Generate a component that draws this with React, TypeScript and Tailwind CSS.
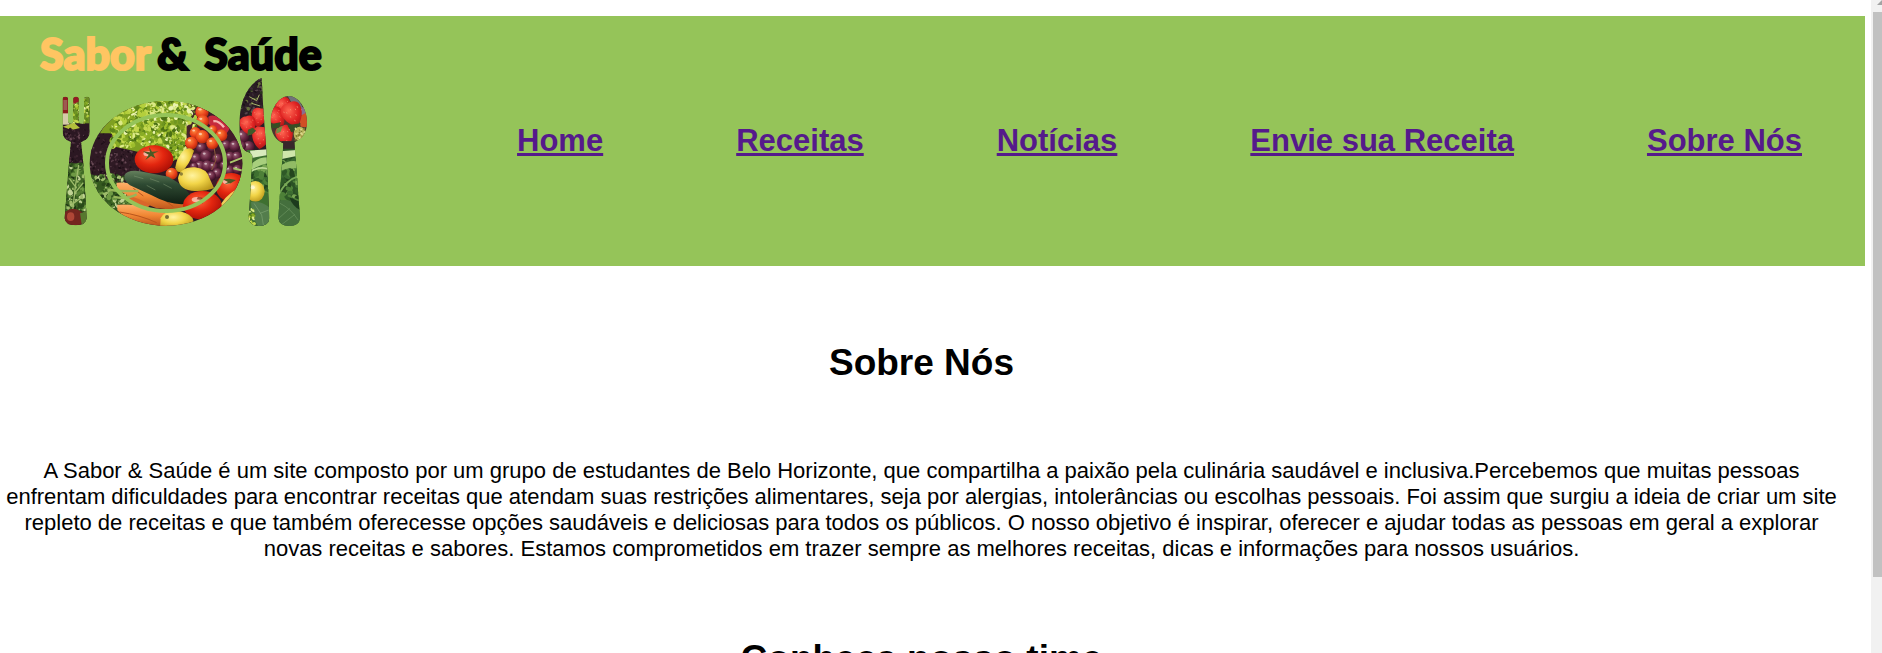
import React from 'react';

type Region = {
  seed: number;
  count: number;
  box: [number, number, number, number];
  size: [number, number];
  colors: string[];
};

function scatter({ seed, count, box, size, colors }: Region) {
  let s = seed;
  const next = () => {
    s = (s * 16807) % 2147483647;
    return s / 2147483647;
  };
  for (let i = 0; i < 5; i++) next();
  return Array.from({ length: count }, () => {
    const x = box[0] + next() * (box[2] - box[0]);
    const y = box[1] + next() * (box[3] - box[1]);
    const r = size[0] + next() * (size[1] - size[0]);
    const squash = 0.4 + next() * 0.5;
    const turn = next() * 180;
    const fill = colors[Math.floor(next() * colors.length)];
    return { x, y, r, squash, turn, fill };
  });
}

function Texture(props: Region) {
  return (
    <g>
      {scatter(props).map((d, i) => (
        <ellipse
          key={i}
          cx={d.x}
          cy={d.y}
          rx={d.r}
          ry={d.r * d.squash}
          fill={d.fill}
          transform={`rotate(${d.turn} ${d.x} ${d.y})`}
        />
      ))}
    </g>
  );
}

const LETTUCE = ['#c3d84e', '#9dbd2c', '#6f9620', '#4b7015', '#dbe986', '#b4cf3c', '#8aad25', '#e9f2ae', '#5c841a'];
const BEANS = ['#2a1620', '#3f2531', '#1d0f17', '#533542', '#35202a', '#6a4a56'];
const HERBS = ['#3f6a26', '#6f9a44', '#2a4a1a', '#9dbb6a', '#557f33', '#1f3815', '#c0d294'];
const LEAVES = ['#4d8038', '#2f5a27', '#77a552', '#3c6c31', '#24451f'];

function Ball({ x, y, r, fill, ry }: { x: number; y: number; r: number; fill: string; ry?: number }) {
  return (
    <g>
      <ellipse cx={x} cy={y} rx={r} ry={ry ?? r} fill={fill} />
      <ellipse cx={x - r * 0.3} cy={y - (ry ?? r) * 0.4} rx={r * 0.25} ry={(ry ?? r) * 0.18} fill="#fff" opacity="0.55" />
    </g>
  );
}

function Strawberry({ x, y, r, turn }: { x: number; y: number; r: number; turn: number }) {
  return (
    <g transform={`translate(${x} ${y}) rotate(${turn}) scale(${r / 30})`}>
      <path d="M0 36C-18 26-30 2-26-14C-22-28-8-30 0-28C10-30 24-28 27-13C30 3 17 27 0 36Z" fill="url(#berry)" />
      <path d="M-12-8v4M0-12v4M12-8v4M-7 5v4M8 6v4M0 18v4M-18-12v4M19-12v4" stroke="#f58a6c" strokeWidth="2" />
    </g>
  );
}

const GRAPES: [number, number, number][] = [
  [588, 476, 16], [604, 444, 16], [618, 468, 18], [600, 498, 16], [622, 498, 17], [582, 500, 12],
  [652, 476, 15], [640, 500, 14], [652, 520, 15], [634, 528, 14], [678, 436, 15], [704, 438, 17],
  [690, 470, 15], [710, 470, 15], [688, 512, 16], [712, 508, 14], [672, 496, 13], [636, 444, 13],
];

const CHERRY: [number, number, number][] = [
  [606, 336, 20], [608, 364, 19], [586, 398, 17], [607, 410, 20], [574, 429, 19], [637, 430, 18],
  [664, 406, 18], [638, 390, 14], [515, 521, 18],
];

function PlateLogo() {
  return (
    <svg viewBox="180 225 750 465" className="ml-5 h-[155px] w-[250px]" role="img" aria-label="Prato com talheres">
      <defs>
        <radialGradient id="tomato" cx="0.4" cy="0.35" r="0.7">
          <stop offset="0" stopColor="#ff6a3c" />
          <stop offset="0.5" stopColor="#e3260f" />
          <stop offset="1" stopColor="#a80d05" />
        </radialGradient>
        <radialGradient id="cherry" cx="0.4" cy="0.35" r="0.7">
          <stop offset="0" stopColor="#ff8a3c" />
          <stop offset="0.6" stopColor="#e8401a" />
          <stop offset="1" stopColor="#a82408" />
        </radialGradient>
        <radialGradient id="grape" cx="0.4" cy="0.35" r="0.7">
          <stop offset="0" stopColor="#9c6076" />
          <stop offset="0.55" stopColor="#642440" />
          <stop offset="1" stopColor="#2e0b1e" />
        </radialGradient>
        <radialGradient id="lemon" cx="0.4" cy="0.35" r="0.7">
          <stop offset="0" stopColor="#fff3a0" />
          <stop offset="0.5" stopColor="#f2d548" />
          <stop offset="1" stopColor="#bd9a1c" />
        </radialGradient>
        <linearGradient id="carrot" x1="0" y1="0" x2="0" y2="1">
          <stop offset="0" stopColor="#ffb069" />
          <stop offset="0.5" stopColor="#f08633" />
          <stop offset="1" stopColor="#b8501a" />
        </linearGradient>
        <linearGradient id="cucumber" x1="0" y1="0" x2="0" y2="1">
          <stop offset="0" stopColor="#64805c" />
          <stop offset="0.4" stopColor="#2f4b33" />
          <stop offset="1" stopColor="#101f13" />
        </linearGradient>
        <radialGradient id="berry" cx="0.4" cy="0.3" r="0.8">
          <stop offset="0" stopColor="#ff6652" />
          <stop offset="0.55" stopColor="#e02423" />
          <stop offset="1" stopColor="#9b1012" />
        </radialGradient>
        <clipPath id="plate">
          <ellipse cx="498" cy="490" rx="229" ry="187" />
        </clipPath>
        <clipPath id="fork">
          <path d="M188 298Q188 290 196 290Q204 290 204 298V362Q204 371 212 371Q220 371 220 362V298Q220 290 228 290Q236 290 236 298V362Q236 371 244 371Q252 371 252 362V298Q252 290 261 290Q269 290 269 298V396Q269 418 243 426L250 490L260 655Q258 676 227 676Q196 676 194 655L207 490L213 426Q188 418 188 396Z" />
        </clipPath>
        <clipPath id="knife">
          <path d="M785 234L790 330L799 450L808 655Q806 678 777 678Q749 678 746 655L758 475Q758 457 742 455C725 452 718 410 718 375C718 310 740 252 785 234Z" />
        </clipPath>
        <clipPath id="spoon">
          <path d="M866 288C895 288 921 325 921 366C921 400 905 418 883 426L888 490L900 655Q898 678 868 678Q838 678 835 655L846 490L850 430C828 422 812 400 812 366C812 325 838 288 866 288Z" />
        </clipPath>
      </defs>

      <g clipPath="url(#plate)">
        <rect x="260" y="300" width="480" height="390" fill="#2f1a24" />
        <Texture seed={71} count={420} box={[262, 370, 440, 590]} size={[2, 5]} colors={BEANS} />
        <path d="M300 400Q330 340 400 300H600L592 350L578 390L545 425L560 470L520 480L400 452L345 440L335 400Z" fill="#7fa022" />
        <Texture seed={19} count={620} box={[335, 300, 580, 440]} size={[3, 10]} colors={LETTUCE} />
        <Texture seed={23} count={80} box={[510, 420, 560, 480]} size={[3, 8]} colors={LETTUCE} />
        <path d="M560 300H740V560H560Z" fill="#421b2b" opacity="0.95" />
        <Texture seed={37} count={60} box={[555, 308, 588, 384]} size={[4, 9]} colors={LETTUCE} />
        <path d="M625 350Q650 335 690 385L680 400Q645 400 625 370Z" fill="#c52a3c" />
        <path d="M640 364Q655 360 672 382" fill="none" stroke="#f5b4b0" strokeWidth="7" />
        {GRAPES.map(([x, y, r]) => (
          <Ball key={`${x}-${y}`} x={x} y={y} r={r} fill="url(#grape)" />
        ))}
        <path d="M642 440L648 480L635 510" fill="none" stroke="#8a5a3a" strokeWidth="3" />
        {CHERRY.map(([x, y, r]) => (
          <Ball key={`${x}-${y}`} x={x} y={y} r={r} fill="url(#cherry)" />
        ))}
        <path d="M690 488L735 470M700 505L735 514" stroke="#a9c66a" strokeWidth="6" />
        <path d="M555 448Q572 440 582 452Q570 492 545 515Q528 520 526 502Q530 470 555 448Z" fill="url(#lemon)" />
        <Ball x={462} y={478} r={58} ry={42} fill="url(#tomato)" />
        <path d="M447 440L450 457L428 454L446 464L436 480L453 468L466 475L460 461L476 454L456 455Z" fill="#4b5a24" />
        <path d="M262 520L350 545L420 610L380 650L262 600Z" fill="#355a20" />
        <Texture seed={53} count={200} box={[270, 525, 390, 625]} size={[2, 9]} colors={HERBS} />
        <path d="M350 548Q405 545 455 570L555 614L560 632L470 625Q405 600 350 568Z" fill="url(#carrot)" />
        <path d="M380 586Q420 595 450 615L440 626Q400 620 372 594Z" fill="#d9662b" />
        <path d="M352 614Q430 610 500 640L500 680H420Q375 660 352 630Z" fill="url(#carrot)" />
        <path d="M358 636Q420 645 470 668M400 565L430 588M480 590L520 620" fill="none" stroke="#b8541d" strokeWidth="3" />
        <path d="M330 570Q370 575 415 573M340 590Q380 600 410 583" fill="none" stroke="#97b55a" strokeWidth="7" />
        <path d="M373 526Q382 508 420 514L505 530Q560 560 572 590L555 612Q510 616 455 586L390 556Q372 545 373 526Z" fill="url(#cucumber)" />
        <path d="M402 528L430 536M450 536L478 546M490 552L515 565M440 556L466 570" stroke="#88a07a" strokeWidth="3" opacity="0.45" />
        <path d="M534 535Q540 500 585 502Q622 505 630 538L642 564Q620 574 585 573Q538 572 534 535Z" fill="url(#lemon)" />
        <circle cx="544" cy="522" r="5" fill="#8f8138" />
        <Ball x={694} y={562} r={46} ry={43} fill="url(#tomato)" />
        <path d="M668 538L684 546L674 552L692 550L708 540L688 536Z" fill="#4b5a24" />
        <path d="M663 611Q690 570 730 562V620L660 640Z" fill="#eed05a" />
        <Ball x={607} y={616} r={58} ry={43} fill="url(#tomato)" />
        <path d="M594 590L610 594L625 590L612 600L608 612L604 600L590 598Z" fill="#7d2810" opacity="0.7" />
        <path d="M482 655Q490 630 540 634Q578 644 580 662L575 685H480Z" fill="url(#lemon)" />
        <circle cx="501" cy="651" r="6" fill="#777033" />
      </g>
      <ellipse cx="498" cy="489" rx="177" ry="144" fill="none" stroke="#95c459" strokeWidth="12" />

      <g clipPath="url(#fork)">
        <rect x="180" y="285" width="95" height="400" fill="#2b1722" />
        <rect x="180" y="285" width="28" height="58" fill="#8c1c1d" />
        <path d="M190 300h12v30h-12z" fill="#9d5a50" />
        <rect x="180" y="340" width="28" height="34" fill="#d4cba8" />
        <rect x="215" y="285" width="60" height="85" fill="#6b8c25" />
        <Texture seed={91} count={90} box={[218, 300, 270, 370]} size={[3, 7]} colors={LETTUCE} />
        <path d="M216 285h24v18l-20 10z" fill="#941a23" />
        <path d="M188 380L222 368L240 384L215 390Z" fill="#b3bf3c" />
        <Texture seed={12} count={140} box={[188, 384, 270, 490]} size={[2, 5]} colors={BEANS} />
        <rect x="180" y="490" width="95" height="145" fill="#3e6524" />
        <Texture seed={33} count={150} box={[192, 490, 264, 645]} size={[2, 10]} colors={HERBS} />
        <path d="M236 495L226 560L216 650M226 560L208 535M224 580L250 548M220 610L248 590" fill="none" stroke="#9dbb6a" strokeWidth="4" />
        <ellipse cx="220" cy="654" rx="32" ry="28" fill="#74251f" />
        <ellipse cx="212" cy="650" rx="11" ry="13" fill="#b04636" />
        <path d="M240 640L262 632V680H246Z" fill="#56792e" />
      </g>

      <g clipPath="url(#knife)">
        <rect x="710" y="230" width="105" height="455" fill="#2a1c25" />
        <Texture seed={46} count={100} box={[720, 236, 795, 345]} size={[2, 6]} colors={['#3c2b35', '#1b1118', '#55444a', '#66703a', '#2c3320']} />
        <path d="M748 290L770 302L778 284M755 310L780 318" fill="none" stroke="#a8b56a" strokeWidth="3" />
        <Strawberry x={778} y={350} r={27} turn={12} />
        <Ball x={728} y={410} r={20} fill="url(#grape)" />
        <Strawberry x={744} y={374} r={27} turn={-15} />
        <Ball x={746} y={441} r={18} fill="url(#grape)" />
        <Ball x={724} y={438} r={14} fill="url(#grape)" />
        <Strawberry x={783} y={410} r={31} turn={8} />
        <path d="M744 389L758 383L768 392L757 403L742 407Z" fill="#3f5a29" />
        <rect x="740" y="450" width="75" height="235" fill="#3e7030" />
        <Texture seed={63} count={60} box={[745, 500, 810, 570]} size={[5, 14]} colors={LEAVES} />
        <path d="M750 452L804 448V465L754 474Z" fill="#d9ebbd" />
        <path d="M750 498Q770 470 808 472V488Q775 495 750 512Z" fill="#a8cf7d" />
        <path d="M750 516Q780 496 806 508" fill="none" stroke="#bfdd98" strokeWidth="5" />
        <Ball x={766} y={574} r={28} ry={31} fill="url(#lemon)" />
        <path d="M753 606Q780 600 812 625V680H775Q755 650 753 606Z" fill="#537d4c" />
        <path d="M762 610L785 645L790 675M780 640L806 630" fill="none" stroke="#7fa572" strokeWidth="2" />
        <Texture seed={27} count={35} box={[742, 625, 762, 680]} size={[2, 7]} colors={LETTUCE} />
      </g>

      <g clipPath="url(#spoon)">
        <rect x="805" y="280" width="125" height="150" fill="#4b3530" />
        <path d="M862 286Q900 290 910 330L885 326Z" fill="#6f7379" />
        <Ball x={907} y={334} r={12} fill="#8a6b8f" />
        <path d="M896 350L925 335V382L902 380Z" fill="#d24e25" />
        <Strawberry x={850} y={318} r={26} turn={-20} />
        <Strawberry x={829} y={350} r={28} turn={-40} />
        <Strawberry x={876} y={340} r={35} turn={-22} />
        <Strawberry x={854} y={404} r={29} turn={-20} />
        <path d="M814 372L842 367L838 383L815 385ZM862 376L902 370L894 388L874 397Z" fill="#354e24" />
        <path d="M830 386L848 378L842 395L828 401Z" fill="#6f8f45" />
        <ellipse cx="899" cy="402" rx="18" ry="22" fill="#b8b55b" />
        <Texture seed={82} count={35} box={[885, 385, 916, 422]} size={[2, 5]} colors={['#e0dc91', '#a39a45', '#7d7b2d']} />
        <rect x="830" y="424" width="80" height="260" fill="#2a5125" />
        <path d="M845 424H888V446H846Z" fill="#38262b" />
        <Texture seed={15} count={75} box={[838, 480, 900, 610]} size={[5, 15]} colors={LEAVES} />
        <path d="M840 454L890 450V468L842 478Z" fill="#cfe6aa" />
        <path d="M838 500Q865 478 895 485L890 505Q865 500 838 515Z" fill="#91bb65" />
        <path d="M838 580Q860 540 892 530" fill="none" stroke="#78a957" strokeWidth="6" />
        <path d="M832 604Q870 590 902 625V680H832Z" fill="#446f3d" />
        <path d="M840 610Q872 625 894 660M836 655L870 625M842 676L885 643" fill="none" stroke="#6c9560" strokeWidth="2" />
        <path d="M868 592L900 605V630Q878 620 868 592Z" fill="#1c3b1d" />
      </g>
    </svg>
  );
}

const LINKS = ['Home', 'Receitas', 'Notícias', 'Envie sua Receita', 'Sobre Nós'];

export default function App() {
  return (
    <div className="flex h-screen overflow-hidden bg-white font-['Liberation_Sans',Arial,sans-serif] text-black">
      <div className="min-w-0 flex-1 overflow-hidden pt-4 pr-1.5">
        <div className="-ml-[22px]">
          <header className="flex h-[250px] items-center justify-between bg-[#95c459] pr-[63px] pl-[62px]">
            <div className="flex h-full shrink-0 flex-col pt-4">
              <div className="flex h-[43px] items-center text-[43px] leading-[43px] font-black whitespace-nowrap font-['Lato',sans-serif] [-webkit-text-stroke-width:2px]">
                <span className="text-[#ffc562]">Sabor</span>
                <span className="ml-1.5">&amp;</span>
                <span className="ml-4">Saúde</span>
              </div>
              <PlateLogo />
            </div>
            <nav className="flex gap-[133px] text-[31px] leading-9 font-bold whitespace-nowrap">
              {LINKS.map((label) => (
                <a key={label} href="#" className="text-[#551a8b] underline decoration-[3px] underline-offset-2">
                  {label}
                </a>
              ))}
            </nav>
          </header>
          <main className="text-center">
            <h1 className="mt-[75px] text-[37px] leading-[44px] font-bold">Sobre Nós</h1>
            <p className="mt-[73px] text-[22px] leading-[26px]">
              A Sabor &amp; Saúde é um site composto por um grupo de estudantes de Belo Horizonte, que compartilha a paixão
              pela culinária saudável e inclusiva.Percebemos que muitas pessoas
              <br />
              enfrentam dificuldades para encontrar receitas que atendam suas restrições alimentares, seja por alergias,
              intolerâncias ou escolhas pessoais. Foi assim que surgiu a ideia de criar um site
              <br />
              repleto de receitas e que também oferecesse opções saudáveis e deliciosas para todos os públicos. O nosso
              objetivo é inspirar, oferecer e ajudar todas as pessoas em geral a explorar
              <br />
              novas receitas e sabores. Estamos comprometidos em trazer sempre as melhores receitas, dicas e informações
              para nossos usuários.
            </p>
            <h2 className="mt-[75px] text-[37px] leading-[44px] font-bold">Conheça nosso time</h2>
          </main>
        </div>
      </div>
      <div className="flex w-[11px] shrink-0 flex-col bg-[#f1f1f1] pl-0.5" aria-hidden="true">
        <svg viewBox="0 0 9 12" className="h-3 w-[9px] shrink-0">
          <path d="M4 5L9 0V5Z" fill="#a3a3a3" />
        </svg>
        <div className="h-[565px] bg-[#c1c1c1]" />
      </div>
    </div>
  );
}
